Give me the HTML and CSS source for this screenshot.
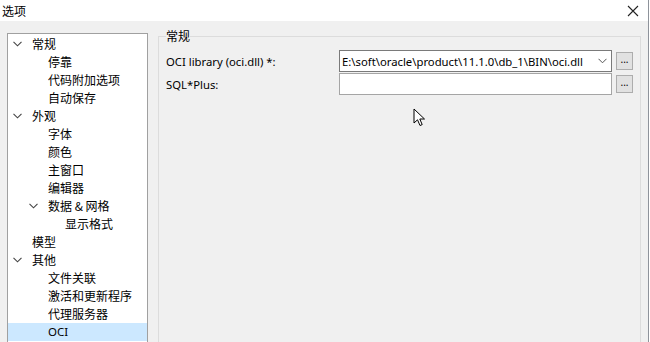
FILE: index.html
```html
<!DOCTYPE html>
<html lang="zh-CN">
<head>
  <meta charset="UTF-8">
  <title>选项</title>
  <link rel="stylesheet" href="styles.css">
</head>
<body>
  <div class="window">
    <div class="titlebar">
      <span class="title">选项</span>
      <svg class="close" width="12" height="12" viewBox="0 0 12 12">
        <path d="M1 1 L11 11 M11 1 L1 11" stroke="#222" stroke-width="1.1" fill="none"/>
      </svg>
    </div>

    <div class="content">
      <div class="tree">
        <div class="node lvl0"><span class="chev"><svg width="9" height="6" viewBox="0 0 9 6"><path d="M0.5 0.8 L4.5 4.8 L8.5 0.8" stroke="#444" stroke-width="1.1" fill="none"/></svg></span>常规</div>
        <div class="node lvl1">停靠</div>
        <div class="node lvl1">代码附加选项</div>
        <div class="node lvl1">自动保存</div>
        <div class="node lvl0"><span class="chev"><svg width="9" height="6" viewBox="0 0 9 6"><path d="M0.5 0.8 L4.5 4.8 L8.5 0.8" stroke="#444" stroke-width="1.1" fill="none"/></svg></span>外观</div>
        <div class="node lvl1">字体</div>
        <div class="node lvl1">颜色</div>
        <div class="node lvl1">主窗口</div>
        <div class="node lvl1">编辑器</div>
        <div class="node lvl1 has-kids"><span class="chev"><svg width="9" height="6" viewBox="0 0 9 6"><path d="M0.5 0.8 L4.5 4.8 L8.5 0.8" stroke="#444" stroke-width="1.1" fill="none"/></svg></span>数据 &amp; 网格</div>
        <div class="node lvl2">显示格式</div>
        <div class="node lvl0 leaf">模型</div>
        <div class="node lvl0"><span class="chev"><svg width="9" height="6" viewBox="0 0 9 6"><path d="M0.5 0.8 L4.5 4.8 L8.5 0.8" stroke="#444" stroke-width="1.1" fill="none"/></svg></span>其他</div>
        <div class="node lvl1">文件关联</div>
        <div class="node lvl1">激活和更新程序</div>
        <div class="node lvl1">代理服务器</div>
        <div class="node lvl1 selected">OCI</div>
      </div>

      <fieldset class="group">
        <legend>常规</legend>
        <div class="row">
          <label class="lbl">OCI library (oci.dll) *:</label>
          <div class="combo">
            <span class="combo-text">E:\soft\oracle\product\11.1.0\db_1\BIN\oci.dll</span>
            <svg class="combo-arrow" width="9" height="6" viewBox="0 0 9 6"><path d="M0.5 0.8 L4.5 4.8 L8.5 0.8" stroke="#555" stroke-width="1" fill="none"/></svg>
          </div>
          <button class="browse">...</button>
        </div>
        <div class="row">
          <label class="lbl">SQL*Plus:</label>
          <div class="field"></div>
          <button class="browse">...</button>
        </div>
      </fieldset>
    </div>

    <svg class="cursor" width="13" height="20" viewBox="0 0 13 20">
      <path d="M1 1 L1 15 L4.5 11.8 L7 17.5 L9.2 16.6 L6.8 11 L11.5 11 Z" fill="#fff" stroke="#000" stroke-width="1" stroke-linejoin="round"/>
    </svg>
  </div>
</body>
</html>
```

FILE: styles.css
```css
html, body {
  margin: 0;
  padding: 0;
}
body {
  width: 650px;
  height: 342px;
  overflow: hidden;
  font-family: "Noto Sans", "Noto Sans CJK SC", sans-serif;
  font-size: 12px;
  color: #000;
  background: #fff;
}
.window {
  position: relative;
  width: 648px;
  height: 342px;
  border-right: 1px solid #8e939b;
  background: #f0f0f0;
  overflow: hidden;
}
.titlebar {
  height: 21px;
  background: #fff;
  display: flex;
  align-items: center;
  justify-content: space-between;
  padding: 0 9px 0 2px;
}
.title {
  font-family: "Noto Sans CJK SC", sans-serif;
  font-size: 12px;
  line-height: 21px;
}
.close {
  display: block;
}
.content {
  display: flex;
  align-items: flex-start;
  padding: 12px 0 0 7px;
}

/* tree */
.tree {
  width: 139px;
  height: 320px;
  background: #fff;
  border: 1px solid #a0a0a0;
  padding-top: 1px;
  font-family: "Noto Sans CJK SC", sans-serif;
}
.node {
  position: relative;
  height: 18px;
  line-height: 18px;
  white-space: nowrap;
}
.lvl0 { padding-left: 24px; }
.lvl1 { padding-left: 40px; }
.lvl2 { padding-left: 57px; }
.node .chev {
  display: inline-block;
  width: 9px;
  height: 6px;
  margin-left: -19px;
  margin-right: 10px;
  vertical-align: 2px;
}
.node .chev svg { display: block; }
.selected {
  background: #cce8ff;
  font-family: "Noto Sans", sans-serif;
  font-size: 11.5px;
}

/* group box */
.group {
  margin: -4px 0 0 10px;
  padding: 7px 0 0 7px;
  width: 474px;
  height: 330px;
  border: 1px solid #dcdcdc;
  border-bottom: none;
}
.group legend {
  padding: 0;
  margin-left: 0;
  font-family: "Noto Sans CJK SC", sans-serif;
  line-height: 14px;
}
.row {
  display: flex;
  align-items: center;
  height: 22px;
  margin-bottom: 1px;
  font-size: 11.3px;
}
.lbl {
  width: 173px;
  flex: none;
}
.combo, .field {
  width: 271px;
  height: 20px;
  background: #fff;
  border: 1px solid #7a7a7a;
  display: flex;
  align-items: center;
  flex: none;
}
.field { border-color: #a5a5a5; }
.combo-text {
  flex: 1;
  padding-left: 2px;
  white-space: nowrap;
  overflow: hidden;
}
.combo-arrow {
  margin-right: 4px;
}
.browse {
  margin: 0 0 0 4px;
  width: 17px;
  height: 18px;
  padding: 0 0 5px 0;
  border: 1px solid #adadad;
  background: #e1e1e1;
  font-family: "Noto Sans", sans-serif;
  font-size: 10px;
  line-height: 8px;
  color: #000;
}

.cursor {
  position: absolute;
  left: 413px;
  top: 108px;
}
```
